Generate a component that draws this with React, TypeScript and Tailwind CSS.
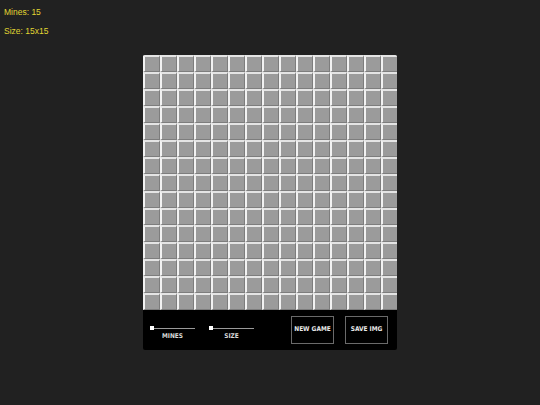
import React from "react";

export default function App() {
  const cells = Array.from({ length: 225 });
  return (
    <div className="w-[540px] h-[405px] bg-[#212121] relative overflow-hidden" style={{ fontFamily: '"Liberation Sans", Arial, sans-serif' }}>
      <div className="absolute left-[4px] top-[6px] text-[8.5px] leading-[12px] text-[#e2d632] flex flex-col gap-[7px]">
        <div>Mines: 15</div>
        <div>Size: 15x15</div>
      </div>
      <div className="pt-[55px] flex justify-center">
        <div className="w-[254px] bg-black rounded-[2px] overflow-hidden">
          <div className="grid grid-cols-[repeat(15,17px)] grid-rows-[repeat(15,17px)] w-[255px]">
            {cells.map((_, i) => (
              <div
                key={i}
                className="bg-[#9b9b9b] border-l-[2px] border-t-[2px] border-r border-b border-l-[#f2f2f2] border-t-[#e4e4e4] border-r-[#7d7d7d] border-b-[#7d7d7d]"
              />
            ))}
          </div>
          <div className="h-[40px] flex items-center pl-[7px]" style={{ fontFamily: '"DejaVu Sans Condensed", "DejaVu Sans", sans-serif' }}>
            <div className="flex flex-col w-[45px] mt-[6px]">
              <div className="relative h-[4px] flex items-center">
                <div className="h-[1px] w-full bg-[#9a9a9a]" />
                <div className="absolute left-0 top-0 w-[4px] h-[4px] bg-white" />
              </div>
              <div className="text-[6.5px] font-bold text-[#d8d8d8] text-center mt-[2px] leading-[8px]">MINES</div>
            </div>
            <div className="flex flex-col w-[45px] ml-[14px] mt-[6px]">
              <div className="relative h-[4px] flex items-center">
                <div className="h-[1px] w-full bg-[#9a9a9a]" />
                <div className="absolute left-0 top-0 w-[4px] h-[4px] bg-white" />
              </div>
              <div className="text-[6.5px] font-bold text-[#d8d8d8] text-center mt-[2px] leading-[8px]">SIZE</div>
            </div>
            <div className="ml-[37px] w-[43px] h-[28px] border border-[#6a6a6a] flex items-center justify-center text-[6.5px] font-bold text-[#e8e8e8]">NEW GAME</div>
            <div className="ml-[11px] w-[43px] h-[28px] border border-[#6a6a6a] flex items-center justify-center text-[6.5px] font-bold text-[#e8e8e8]">SAVE IMG</div>
          </div>
        </div>
      </div>
    </div>
  );
}
